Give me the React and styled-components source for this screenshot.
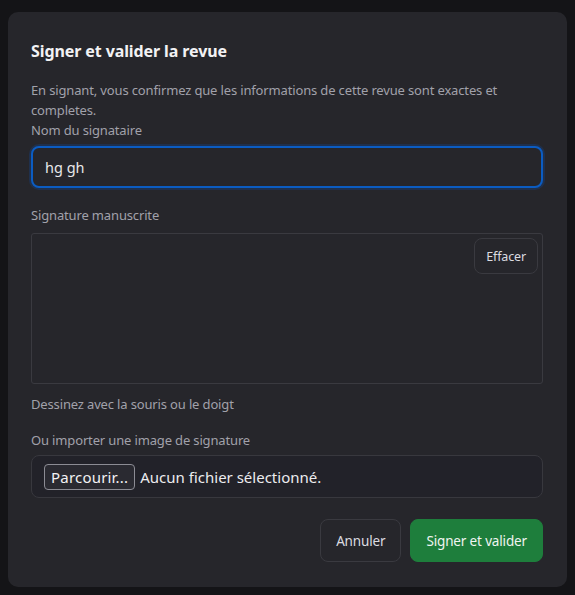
import React, { useState } from 'react';
import styled, { createGlobalStyle } from 'styled-components';

const GlobalStyle = createGlobalStyle`
  html, body {
    margin: 0;
    padding: 0;
    background: #141417;
    font-family: "Noto Sans", "Open Sans", sans-serif;
  }
  * { box-sizing: border-box; }
`;

const Backdrop = styled.div`
  width: 575px;
  height: 595px;
  padding: 12px 8px 0 8px;
  background: #141417;
`;

const Dialog = styled.div`
  width: 559px;
  height: 575px;
  background: #26262b;
  border-radius: 10px;
  padding: 25px 24px 24px 23px;
  display: flex;
  flex-direction: column;
  color: #a1a1aa;
`;

const Title = styled.h2`
  margin: 0;
  font-size: 16px;
  line-height: 28px;
  font-weight: 700;
  color: #f2f2f4;
  letter-spacing: -0.1px;
`;

const Text = styled.p`
  margin: ${p => p.$mt || 0}px 0 0 0;
  font-size: 13px;
  line-height: 20px;
  color: #a1a1aa;
  letter-spacing: -0.15px;
`;

const Label = styled.label`
  display: block;
  margin-top: ${p => p.$mt || 0}px;
  font-size: 13px;
  line-height: 20px;
  color: #a1a1aa;
  letter-spacing: -0.15px;
`;

const Input = styled.input`
  margin-top: 6px;
  width: 100%;
  height: 42px;
  padding: 0 12px;
  background: #26262b;
  border: 2px solid #0b5cc2;
  border-radius: 8px;
  box-shadow: 0 0 0 2px rgba(20, 70, 140, 0.35);
  color: #e8e8ea;
  font-family: inherit;
  font-size: 14.5px;
  outline: none;
`;

const Pad = styled.div`
  margin-top: 8px;
  height: 151px;
  border: 1px solid #3a3a40;
  border-radius: 3px;
  display: flex;
  justify-content: flex-end;
  align-items: flex-start;
  padding: 4px;
`;

const Button = styled.button`
  font-family: inherit;
  border-radius: 8px;
  cursor: pointer;
  font-size: ${p => p.$small ? 12.5 : 13.5}px;
  height: ${p => p.$small ? 36 : 43}px;
  padding: 0 ${p => p.$small ? 11 : 15}px;
  border: 1px solid ${p => p.$primary ? '#1e7e3c' : '#3a3a40'};
  background: ${p => p.$primary ? '#1e7e3c' : '#26262b'};
  color: ${p => p.$primary ? '#f0f4f1' : '#dcdce0'};
  letter-spacing: -0.15px;
`;

const FileBox = styled.label`
  margin-top: 5px;
  height: 43px;
  border: 1px solid #38383e;
  border-radius: 8px;
  background: #222229;
  display: flex;
  align-items: center;
  gap: 5px;
  padding: 0 12px;
  color: #ececee;
  font-size: 15px;
`;

const FileButton = styled.span`
  height: 26px;
  display: inline-flex;
  align-items: center;
  padding: 0 6px;
  border: 1px solid #8c8c94;
  border-radius: 4px;
  background: #2a2a31;
  color: #f2f2f4;
  letter-spacing: 0.2px;
`;

const HiddenFile = styled.input`
  display: none;
`;

const Actions = styled.div`
  margin-top: 21px;
  display: flex;
  justify-content: flex-end;
  gap: 9px;
`;

export default function App() {
  const [name, setName] = useState('hg gh');

  return (
    <>
      <GlobalStyle />
      <Backdrop>
        <Dialog>
          <Title>Signer et valider la revue</Title>
          <Text $mt={15}>
            En signant, vous confirmez que les informations de cette revue sont exactes et completes.
          </Text>
          <Label>Nom du signataire</Label>
          <Input value={name} onChange={e => setName(e.target.value)} />
          <Label $mt={17}>Signature manuscrite</Label>
          <Pad>
            <Button $small>Effacer</Button>
          </Pad>
          <Text $mt={10}>Dessinez avec la souris ou le doigt</Text>
          <Label $mt={16}>Ou importer une image de signature</Label>
          <FileBox>
            <HiddenFile type="file" accept="image/*" />
            <FileButton>Parcourir...</FileButton>
            <span>Aucun fichier sélectionné.</span>
          </FileBox>
          <Actions>
            <Button>Annuler</Button>
            <Button $primary>Signer et valider</Button>
          </Actions>
        </Dialog>
      </Backdrop>
    </>
  );
}
